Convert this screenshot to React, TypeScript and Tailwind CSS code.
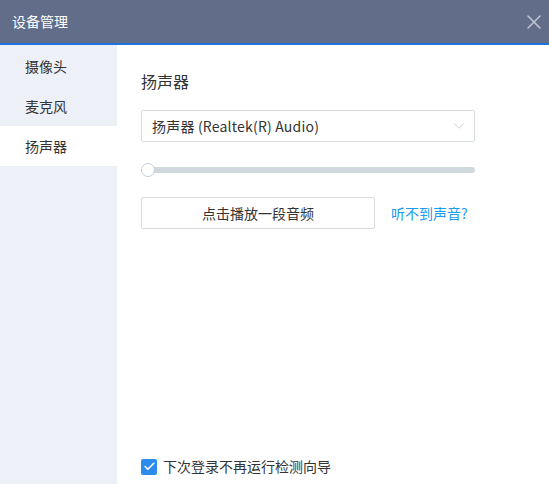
import { Check, ChevronDown, X } from 'lucide-react'

const font = { fontFamily: '"Noto Sans CJK SC", "Noto Sans", sans-serif' }

const tabs = ['摄像头', '麦克风', '扬声器']

export default function App() {
  const active = 2
  return (
    <div className="w-[549px] h-[484px] flex flex-col bg-white text-[#333]" style={font}>
      <div className="h-[45px] shrink-0 bg-[#626d8a] flex items-center justify-between pl-[12px] pr-[3px] border-b-2 border-[#1c74dc]">
        <span className="text-white text-[14px]">设备管理</span>
        <X size={24} strokeWidth={1.5} className="text-[#c2c7d3]" />
      </div>
      <div className="flex flex-1 min-h-0">
        <div className="w-[117px] bg-[#edf0f7] pt-[1px]">
          {tabs.map((t, i) => (
            <div
              key={t}
              className={
                'h-[40px] flex items-center pl-[25px] text-[14px] ' +
                (i === active ? 'bg-white' : '')
              }
            >
              {t}
            </div>
          ))}
        </div>
        <div className="flex-1 pl-[24px] pr-[74px] flex flex-col">
          <div className="mt-[25px] text-[16px] leading-[22px]">扬声器</div>
          <div className="mt-[18px] h-[32px] border border-[#d7dce2] rounded-[2px] flex items-center justify-between pl-[10px] pr-[6px] text-[14px]">
            <span className="tracking-[0.2px]">扬声器 (Realtek(R) Audio)</span>
            <ChevronDown size={18} strokeWidth={1} className="text-[#b8bec8]" />
          </div>
          <div className="mt-[21px] relative h-[14px] flex items-center">
            <div className="ml-[6px] flex-1 h-[6px] rounded-full bg-[#cfd8dc]" />
            <div className="absolute left-0 top-0 w-[14px] h-[14px] rounded-full bg-white border border-[#c6cdd6]" />
          </div>
          <div className="mt-[20px] flex items-center">
            <div className="w-[234px] h-[32px] border border-[#d7dce2] rounded-[2px] flex items-center justify-center text-[14px]">
              点击播放一段音频
            </div>
            <span className="ml-[16px] text-[14px] text-[#1a9bf0]">听不到声音?</span>
          </div>
          <div className="mt-auto mb-[7px] flex items-center gap-[6px] text-[14px]">
            <span className="w-[16px] h-[16px] rounded-[2px] bg-[#2d8ceb] flex items-center justify-center">
              <Check size={13} strokeWidth={3} className="text-white" />
            </span>
            <span>下次登录不再运行检测向导</span>
          </div>
        </div>
      </div>
    </div>
  )
}
